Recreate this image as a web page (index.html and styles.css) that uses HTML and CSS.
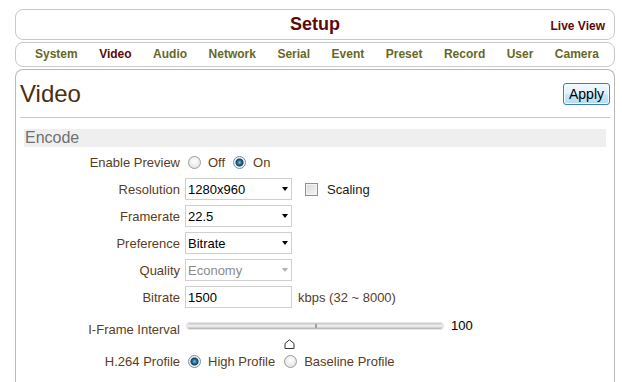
FILE: index.html
```html
<!DOCTYPE html>
<html lang="en">
<head>
    <meta charset="UTF-8">
    <title>Setup - Video</title>
    <link rel="stylesheet" href="styles.css">
</head>
<body>
    <div class="page">
        <div class="topbar">
            <div class="title">Setup</div>
            <a class="live" href="#">Live View</a>
        </div>
        <div class="nav">
            <a href="#">System</a>
            <a href="#" class="active">Video</a>
            <a href="#">Audio</a>
            <a href="#">Network</a>
            <a href="#">Serial</a>
            <a href="#">Event</a>
            <a href="#">Preset</a>
            <a href="#">Record</a>
            <a href="#">User</a>
            <a href="#">Camera</a>
        </div>
        <div class="panel">
            <div class="panel-head">
                <h1>Video</h1>
                <button class="apply">Apply</button>
            </div>
            <div class="section">Encode</div>
            <div class="form">
                <div class="row">
                    <span class="label">Enable Preview</span>
                    <div class="radios">
                        <label class="opt"><input type="radio" name="preview">Off</label>
                        <label class="opt"><input type="radio" name="preview" checked>On</label>
                    </div>
                </div>
                <div class="row">
                    <span class="label">Resolution</span>
                    <div class="select"><span>1280x960</span><i class="arrow"></i></div>
                    <label class="check"><input type="checkbox">Scaling</label>
                </div>
                <div class="row">
                    <span class="label">Framerate</span>
                    <div class="select"><span>22.5</span><i class="arrow"></i></div>
                </div>
                <div class="row">
                    <span class="label">Preference</span>
                    <div class="select"><span>Bitrate</span><i class="arrow"></i></div>
                </div>
                <div class="row">
                    <span class="label">Quality</span>
                    <div class="select disabled"><span>Economy</span><i class="arrow"></i></div>
                </div>
                <div class="row">
                    <span class="label">Bitrate</span>
                    <input class="text" type="text" value="1500">
                    <span class="hint">kbps (32 ~ 8000)</span>
                </div>
                <div class="row tall">
                    <span class="label">I-Frame Interval</span>
                    <div class="slider">
                        <div class="slider-line">
                            <div class="track"><i class="tick"></i></div>
                            <span class="value">100</span>
                        </div>
                        <svg class="thumb" width="11" height="10" viewBox="0 0 11 10">
                            <path d="M1 9.5 V4.5 L5.5 0.8 L10 4.5 V9.5 Z" fill="#fff" stroke="#333" stroke-width="1"/>
                        </svg>
                    </div>
                </div>
                <div class="row">
                    <span class="label">H.264 Profile</span>
                    <div class="radios wide">
                        <label class="opt"><input type="radio" name="profile" checked>High Profile</label>
                        <label class="opt"><input type="radio" name="profile">Baseline Profile</label>
                    </div>
                </div>
            </div>
        </div>
    </div>
</body>
</html>
```

FILE: styles.css
```css
body {
    margin: 0;
    background: #fff;
    font-family: "Liberation Sans", Arial, sans-serif;
    color: #000;
}
.page {
    padding: 9px 7px 0 15px;
}
.topbar {
    display: grid;
    grid-template-columns: 1fr auto 1fr;
    align-items: baseline;
    height: 29px;
    padding: 0 9px;
    border: 1px solid #c8c8c8;
    border-radius: 8px;
}
.title {
    grid-column: 2;
    font-size: 18px;
    font-weight: bold;
    line-height: 29px;
    color: #5c0a0a;
}
.live {
    justify-self: end;
    font-size: 12px;
    font-weight: bold;
    color: #5c0a0a;
    text-decoration: none;
}
.nav {
    margin-top: 2px;
    height: 23px;
    padding: 0 15px 0 19px;
    border: 1px solid #c8c8c8;
    border-radius: 8px;
    display: flex;
    justify-content: space-between;
}
.nav a {
    font-size: 12px;
    font-weight: bold;
    line-height: 23px;
    color: #68681f;
    text-decoration: none;
}
.nav a.active {
    color: #5c0a0a;
}
.panel {
    margin-top: 2px;
    padding-bottom: 40px;
    border: 1px solid #b8b8b8;
    border-bottom: none;
    border-radius: 8px 8px 0 0;
}
.panel-head {
    margin: 0 4px;
    height: 47px;
    display: flex;
    justify-content: space-between;
    align-items: center;
    border-bottom: 1px solid #c8c8c8;
}
.panel-head h1 {
    margin: 0;
    font-size: 24px;
    font-weight: normal;
    color: #4b2e0f;
}
.apply {
    width: 47px;
    height: 22px;
    margin-top: 1px;
    padding: 0;
    font-family: inherit;
    font-size: 14px;
    color: #000;
    background: linear-gradient(#f2f9fd, #e0f2fc 50%, #c9e8f9 50%, #b6ddf3);
    border: 1px solid #3c7fb1;
    border-radius: 3px;
    box-shadow: inset 0 0 0 1px #f4fbff;
}
.section {
    margin: 11px 8px 0;
    height: 18px;
    padding-left: 1px;
    font-size: 16px;
    line-height: 18px;
    color: #707070;
    background: #efefef;
}
.form {
    padding-top: 4px;
    font-size: 13px;
}
.row {
    display: flex;
    align-items: center;
    height: 22px;
    margin-bottom: 5px;
    color: #5a3d22;
}
.row .label {
    width: 164px;
    margin-right: 5px;
    text-align: right;
}
.radios {
    display: flex;
    align-items: center;
    gap: 8px;
    margin-left: 3px;
}
.radios.wide {
    gap: 9px;
}
.opt {
    display: flex;
    align-items: center;
    gap: 7px;
}
.opt input {
    appearance: none;
    width: 13px;
    height: 13px;
    margin: 0;
    border: 1px solid #9c9c9c;
    border-radius: 50%;
    background: radial-gradient(circle at 50% 40%, #fff, #dcdcdc);
}
.opt input:checked {
    border-color: #6f8fa3;
    background: radial-gradient(circle, #7cc3e4 0, #2a7097 2px, #163f57 3.5px, #e4edf2 4.5px, #fff 6px);
}
.select {
    box-sizing: border-box;
    width: 107px;
    height: 22px;
    padding: 0 3px 0 2px;
    border: 1px solid #cfcfcf;
    display: flex;
    align-items: center;
    justify-content: space-between;
    color: #000;
}
.arrow {
    width: 0;
    height: 0;
    border-left: 3.5px solid transparent;
    border-right: 3.5px solid transparent;
    border-top: 4px solid #000;
}
.select.disabled {
    color: #8a8a8a;
}
.select.disabled .arrow {
    border-top-color: #b0b0b0;
}
.check {
    display: flex;
    align-items: center;
    gap: 9px;
    margin-left: 13px;
    color: #1a1a1a;
}
.check input {
    appearance: none;
    width: 13px;
    height: 13px;
    margin: 0;
    border: 1px solid #8f8f8f;
    background: linear-gradient(135deg, #d8d8d8, #f6f6f6);
    box-shadow: inset 0 0 0 1px #f4f4f4;
}
.text {
    box-sizing: border-box;
    width: 107px;
    height: 22px;
    padding: 0 2px;
    border: 1px solid #cfcfcf;
    font-family: inherit;
    font-size: 13px;
    color: #000;
}
.hint {
    margin-left: 6px;
}
.row.tall {
    height: 32px;
    align-items: flex-start;
}
.row.tall .label {
    padding-top: 10px;
    line-height: 14px;
}
.slider {
    margin-left: 2px;
}
.slider-line {
    display: flex;
    align-items: center;
    margin-top: 7px;
}
.track {
    position: relative;
    width: 256px;
    height: 6px;
    border-radius: 3px;
    background: linear-gradient(#c4c4c4, #f4f4f4 50%, #b0b0b0);
    box-shadow: 0 0 0 1px #e6e6e6;
}
.tick {
    position: absolute;
    left: 128px;
    top: 1px;
    width: 2px;
    height: 4px;
    background: #a0a0a0;
}
.value {
    margin-left: 7px;
    padding: 0 1px;
    color: #000;
    background: #f8f8f8;
    line-height: 11px;
}
.thumb {
    display: block;
    margin: 8px 0 0 97px;
}
```
